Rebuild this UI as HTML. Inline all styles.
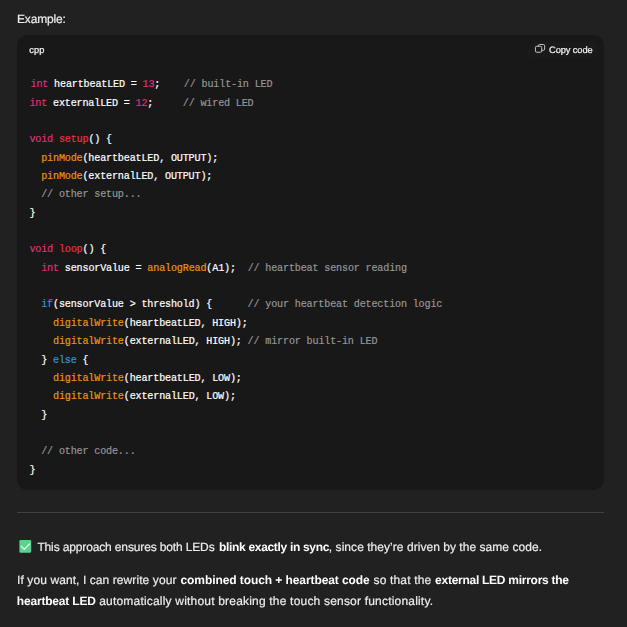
<!DOCTYPE html>
<html lang="en">
<head>
<meta charset="utf-8">
<title>Example</title>
<style>
html,body{margin:0;padding:0;}
body{width:627px;height:627px;overflow:hidden;background:#212121;color:#ececec;font-family:"Liberation Sans",sans-serif;position:relative;}
#wrap{position:absolute;left:0;top:0;width:627px;height:627px;will-change:transform;}
#code{position:absolute;left:17px;top:35px;width:587px;height:455px;background:#181818;border-radius:10px;}
#copybg{position:absolute;left:528px;top:41.5px;width:70px;height:16.5px;border-radius:5px;background:#1a1a1a;}
#ico{position:absolute;left:534px;top:43px;}
.cl{position:absolute;margin:0;font-family:"Liberation Mono",monospace;color:#fff;white-space:pre;-webkit-text-stroke:0.2px;}
.k{color:#df3079;}
.n{color:#df3079;}
.f{color:#f22c3d;}
.b{color:#e9950c;}
.c{color:#959595;}
.kw{color:#2e95d3;}
#hr{position:absolute;left:17px;top:512px;width:587px;height:1px;background:#414141;}
#chk{position:absolute;left:18px;top:539px;}
</style>
</head>
<body>
<div id="code"></div>
<div id="copybg"></div>
<div id="hr"></div>
<div class="cl" id="c0" style="left:30.50px;top:76.00px;font-size:10.10px;letter-spacing:-0.160px;line-height:18.00px;"><span class="k">int</span> heartbeatLED = <span class="n">13</span>;    <span class="c">// built-in LED</span></div>
<div class="cl" id="c1" style="left:29.40px;top:95.00px;font-size:10.10px;letter-spacing:-0.160px;line-height:18.00px;"><span class="k">int</span> externalLED = <span class="n">12</span>;     <span class="c">// wired LED</span></div>
<div class="cl" id="c3" style="left:29.40px;top:131.00px;font-size:10.10px;letter-spacing:-0.160px;line-height:18.00px;"><span class="k">void</span> <span class="f">setup</span>() {</div>
<div class="cl" id="c4" style="left:29.40px;top:150.00px;font-size:10.10px;letter-spacing:-0.160px;line-height:18.00px;">  <span class="b">pinMode</span>(heartbeatLED, OUTPUT);</div>
<div class="cl" id="c5" style="left:29.40px;top:168.00px;font-size:10.10px;letter-spacing:-0.160px;line-height:18.00px;">  <span class="b">pinMode</span>(externalLED, OUTPUT);</div>
<div class="cl" id="c6" style="left:29.40px;top:186.00px;font-size:10.10px;letter-spacing:-0.160px;line-height:18.00px;">  <span class="c">// other setup...</span></div>
<div class="cl" id="c7" style="left:29.40px;top:205.00px;font-size:10.10px;letter-spacing:-0.160px;line-height:18.00px;">}</div>
<div class="cl" id="c9" style="left:29.40px;top:241.00px;font-size:10.10px;letter-spacing:-0.160px;line-height:18.00px;"><span class="k">void</span> <span class="f">loop</span>() {</div>
<div class="cl" id="c10" style="left:29.40px;top:260.00px;font-size:10.10px;letter-spacing:-0.160px;line-height:18.00px;">  <span class="k">int</span> sensorValue = <span class="b">analogRead</span>(A1);  <span class="c">// heartbeat sensor reading</span></div>
<div class="cl" id="c12" style="left:29.40px;top:296.00px;font-size:10.10px;letter-spacing:-0.160px;line-height:18.00px;">  <span class="kw">if</span>(sensorValue &gt; threshold) {      <span class="c">// your heartbeat detection logic</span></div>
<div class="cl" id="c13" style="left:29.40px;top:315.00px;font-size:10.10px;letter-spacing:-0.160px;line-height:18.00px;">    <span class="b">digitalWrite</span>(heartbeatLED, HIGH);</div>
<div class="cl" id="c14" style="left:29.40px;top:333.00px;font-size:10.10px;letter-spacing:-0.160px;line-height:18.00px;">    <span class="b">digitalWrite</span>(externalLED, HIGH); <span class="c">// mirror built-in LED</span></div>
<div class="cl" id="c15" style="left:29.40px;top:352.00px;font-size:10.10px;letter-spacing:-0.160px;line-height:18.00px;">  } <span class="kw">else</span> {</div>
<div class="cl" id="c16" style="left:29.40px;top:370.00px;font-size:10.10px;letter-spacing:-0.160px;line-height:18.00px;">    <span class="b">digitalWrite</span>(heartbeatLED, LOW);</div>
<div class="cl" id="c17" style="left:29.40px;top:388.00px;font-size:10.10px;letter-spacing:-0.160px;line-height:18.00px;">    <span class="b">digitalWrite</span>(externalLED, LOW);</div>
<div class="cl" id="c18" style="left:29.40px;top:407.00px;font-size:10.10px;letter-spacing:-0.160px;line-height:18.00px;">  }</div>
<div class="cl" id="c20" style="left:29.40px;top:443.00px;font-size:10.10px;letter-spacing:-0.160px;line-height:18.00px;">  <span class="c">// other code...</span></div>
<div class="cl" id="c21" style="left:29.40px;top:462.00px;font-size:10.10px;letter-spacing:-0.160px;line-height:18.00px;">}</div>
<div id="wrap">
<svg id="ico" width="13" height="12" viewBox="0 0 13 12" fill="none" stroke="#d6d6d6" stroke-width="0.9"><rect x="1.45" y="3.25" width="6.3" height="6" rx="1.3"/><path d="M4.35 3.25V2.75a1.2 1.2 0 0 1 1.2-1.2h3.9a1.2 1.2 0 0 1 1.2 1.2v3.4a1.2 1.2 0 0 1-1.2 1.2H7.75"/></svg>
<svg id="txt" width="627" height="627" viewBox="0 0 627 627" style="position:absolute;left:0;top:0;" font-family="'Liberation Sans', sans-serif" text-rendering="geometricPrecision">
<text id="ex" x="17.00" y="22.90" font-size="12.00" letter-spacing="-0.153" fill="#ececec" stroke="#ececec" stroke-width="0.2">Example:</text>
<text id="l1a" x="37.38" y="550.50" font-size="12.00" letter-spacing="-0.139" fill="#ececec" stroke="#ececec" stroke-width="0.2">This approach ensures both LEDs</text>
<text id="l1b" x="219.02" y="550.50" font-size="12.00" letter-spacing="-0.321" fill="#ffffff" font-weight="700">blink exactly in sync</text>
<text id="l1c" x="328.87" y="550.50" font-size="12.00" letter-spacing="0.043" fill="#ececec" stroke="#ececec" stroke-width="0.2">, since they’re driven by the same code.</text>
<text id="l2a" x="17.10" y="583.60" font-size="12.00" letter-spacing="0.086" fill="#ececec" stroke="#ececec" stroke-width="0.2">If you want, I can rewrite your</text>
<text id="l2b" x="180.50" y="583.60" font-size="12.00" letter-spacing="-0.081" fill="#ffffff" font-weight="700">combined touch + heartbeat code</text>
<text id="l2c" x="373.55" y="583.60" font-size="12.00" letter-spacing="0.162" fill="#ececec" stroke="#ececec" stroke-width="0.2">so that the</text>
<text id="l2d" x="435.11" y="583.60" font-size="12.00" letter-spacing="-0.268" fill="#ffffff" font-weight="700">external LED mirrors the</text>
<text id="l3a" x="16.80" y="605.00" font-size="12.00" letter-spacing="-0.190" fill="#ffffff" font-weight="700">heartbeat LED</text>
<text id="l3b" x="99.20" y="605.00" font-size="12.00" letter-spacing="0.195" fill="#ececec" stroke="#ececec" stroke-width="0.2">automatically without breaking the touch sensor functionality.</text>
<text id="lang" x="29.36" y="52.80" font-size="9.30" letter-spacing="0.056" fill="#f2f2f2" stroke="#f2f2f2" stroke-width="0.22">cpp</text>
<text id="copy" x="549.05" y="53.00" font-size="9.30" letter-spacing="-0.111" fill="#f2f2f2" stroke="#f2f2f2" stroke-width="0.22">Copy code</text>
</svg>
<svg id="chk" width="15" height="15" viewBox="0 0 15 15" role="img" aria-label="✅"><title>✅</title><rect x="1.4" y="1.05" width="11.8" height="12.75" rx="1.2" fill="#58d28c"/><path d="M3.3 7.3 L6.3 10.4 L11.5 5" fill="none" stroke="#e0f6ea" stroke-width="1.3" stroke-linecap="round" stroke-linejoin="round"/></svg>
</div>
</body>
</html>
